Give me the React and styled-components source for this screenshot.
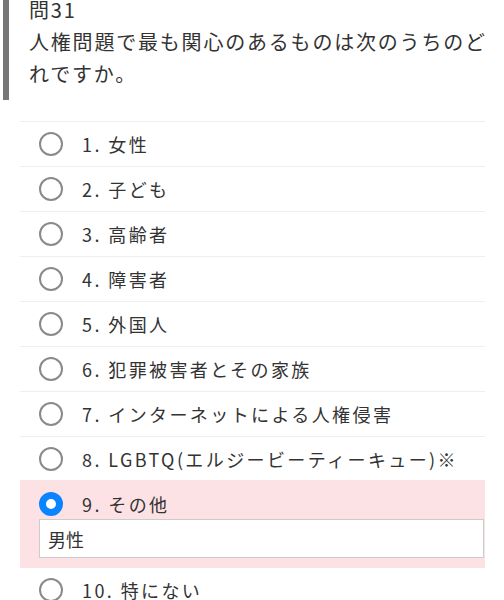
import React, { useState } from "react";
import styled, { createGlobalStyle } from "styled-components";

const GlobalStyle = createGlobalStyle`
  body {
    margin: 0;
    background: #ffffff;
    font-family: "Noto Sans CJK JP", "Noto Sans", sans-serif;
    color: #333333;
  }
`;

const options = [
  "女性",
  "子ども",
  "高齢者",
  "障害者",
  "外国人",
  "犯罪被害者とその家族",
  "インターネットによる人権侵害",
  "LGBTQ(エルジービーティーキュー)※",
  "その他",
  "特にない",
];

const App = () => {
  const [selected, setSelected] = useState(8);
  const [other, setOther] = useState("男性");

  return (
    <Page>
      <GlobalStyle />
      <Question>
        <Number>問31</Number>
        <Text>人権問題で最も関心のあるものは次のうちのどれですか。</Text>
      </Question>
      <List>
        {options.map((label, i) => {
          const isSelected = i === selected;
          const hasInput = isSelected && i === 8;
          return (
            <Item key={label} selected={isSelected}>
              <Row compact={hasInput} onClick={() => setSelected(i)}>
                <Radio selected={isSelected} />
                <Label>
                  {i + 1}. {label}
                </Label>
              </Row>
              {hasInput && (
                <OtherInput
                  value={other}
                  onChange={(ev) => setOther(ev.target.value)}
                />
              )}
            </Item>
          );
        })}
      </List>
    </Page>
  );
};

const Page = styled.div`
  width: 504px;
  height: 600px;
  overflow: hidden;
`;

const Question = styled.div`
  border-left: 6px solid #777777;
  margin-left: 3px;
  padding: 0 0 10px 20px;
  margin-top: -6px;
  font-size: 20px;
  line-height: 32px;
  letter-spacing: 1.8px;
`;

const Number = styled.div``;

const Text = styled.div``;

const List = styled.div`
  margin: 21px 19px 0 20px;
  border-top: 1px solid #eeeeee;
`;

const Item = styled.div`
  background: ${(p) => (p.selected ? "#fde2e5" : "transparent")};
  border-bottom: 1px solid ${(p) => (p.selected ? "transparent" : "#eeeeee")};
  padding: ${(p) => (p.selected ? "9px 0" : "0")};
  margin-top: ${(p) => (p.selected ? "-2px" : "0")};
`;

const Row = styled.div`
  display: flex;
  align-items: center;
  height: ${(p) => (p.compact ? "30px" : "44px")};
  padding-left: 19px;
  cursor: pointer;
`;

const Radio = styled.span`
  box-sizing: border-box;
  width: 24px;
  height: 24px;
  border-radius: 50%;
  border: ${(p) => (p.selected ? "7px solid #0a84ff" : "2px solid #8a8a8a")};
  background: #ffffff;
  flex-shrink: 0;
`;

const Label = styled.span`
  margin-left: 19px;
  font-size: 18px;
  letter-spacing: 2.4px;
  color: #333333;
`;

const OtherInput = styled.input`
  display: block;
  box-sizing: border-box;
  margin-left: 19px;
  width: calc(100% - 20px);
  height: 39px;
  border: 1px solid #cccccc;
  background: #ffffff;
  padding: 0 8px;
  font-family: "Noto Sans CJK JP", sans-serif;
  font-size: 18px;
  color: #333333;
  outline: none;
`;

export default App;
